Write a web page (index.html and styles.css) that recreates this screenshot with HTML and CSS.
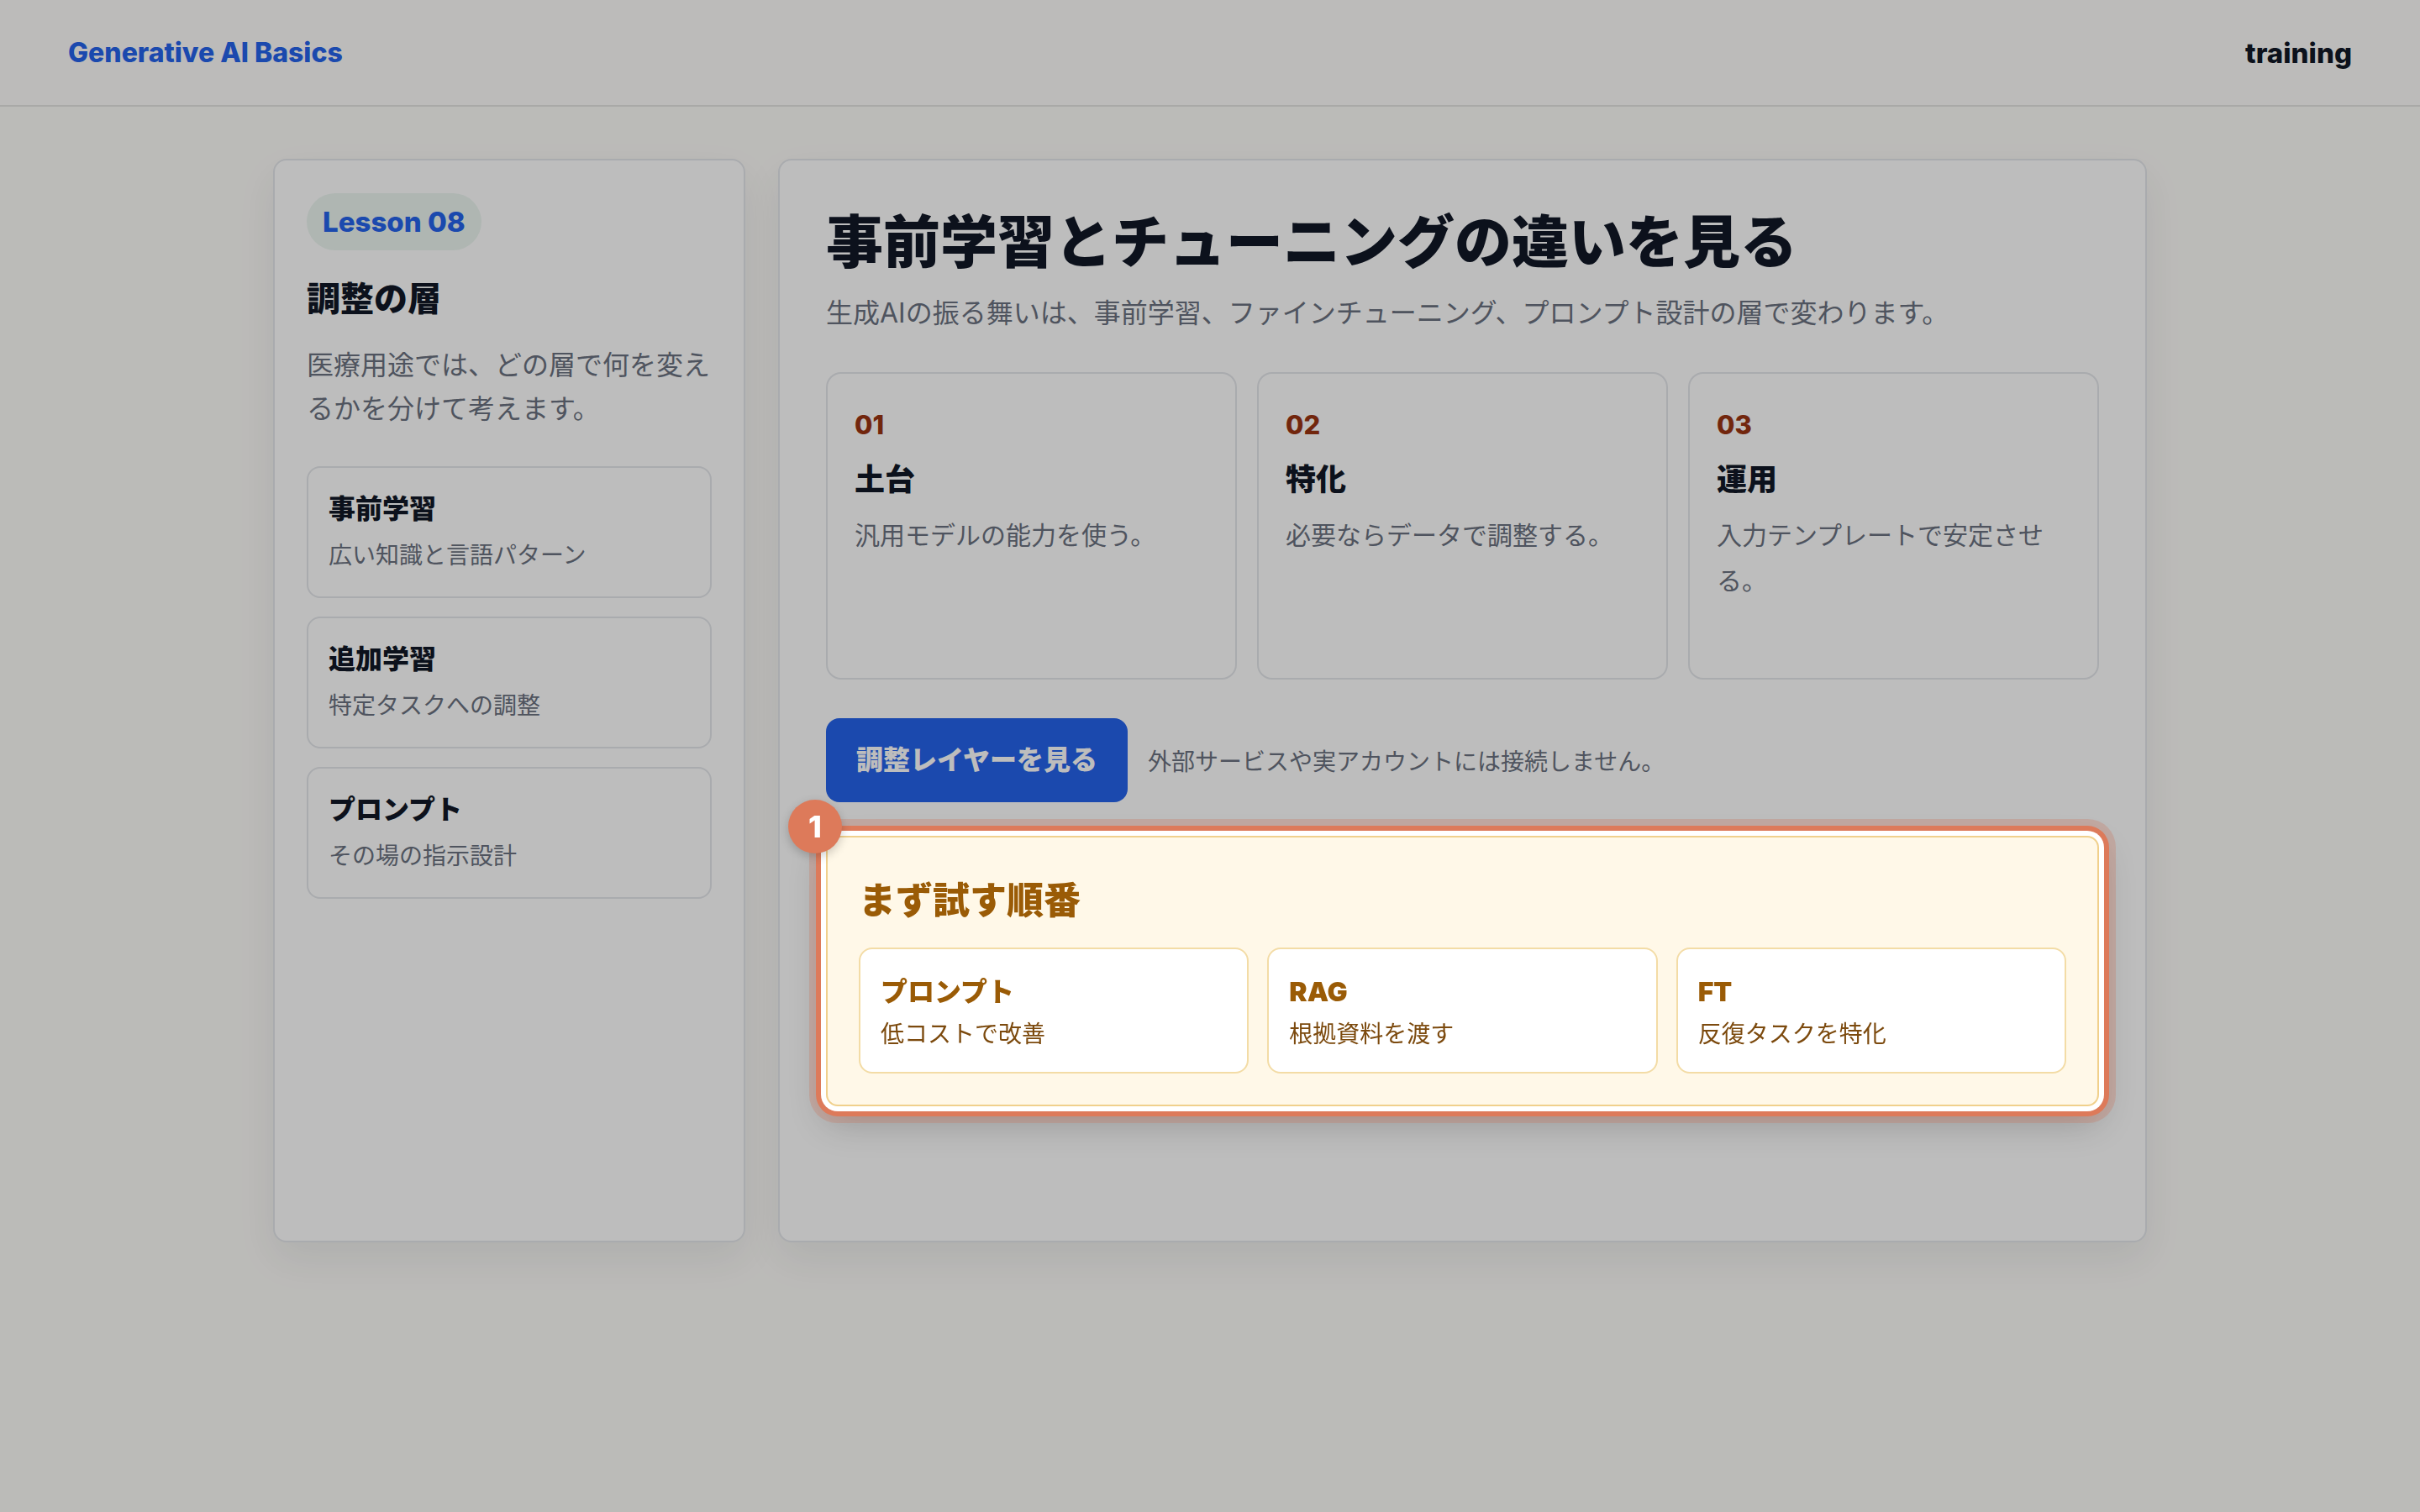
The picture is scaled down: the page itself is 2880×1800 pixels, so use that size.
FILE: index.html
```html
<!DOCTYPE html>
<html lang="ja">
<head>
  <meta charset="UTF-8">
  <title>Lesson 08 - Generative AI Basics</title>
  <link rel="stylesheet" href="styles.css">
</head>
<body>
  <header class="topbar">
    <a class="brand" href="#">Generative AI Basics</a>
    <span class="mode">training</span>
  </header>

  <main class="lesson">
    <aside class="side">
      <span class="badge">Lesson 08</span>
      <h2>調整の層</h2>
      <p class="side-lead">医療用途では、どの層で何を変えるかを分けて考えます。</p>
      <ul class="layers">
        <li class="layer"><strong>事前学習</strong><span>広い知識と言語パターン</span></li>
        <li class="layer"><strong>追加学習</strong><span>特定タスクへの調整</span></li>
        <li class="layer"><strong>プロンプト</strong><span>その場の指示設計</span></li>
      </ul>
    </aside>

    <section class="content">
      <h1>事前学習とチューニングの違いを見る</h1>
      <p class="lead">生成AIの振る舞いは、事前学習、ファインチューニング、プロンプト設計の層で変わります。</p>

      <div class="steps">
        <div class="step">
          <span class="step-no">01</span>
          <h3>土台</h3>
          <p>汎用モデルの能力を使う。</p>
        </div>
        <div class="step">
          <span class="step-no">02</span>
          <h3>特化</h3>
          <p>必要ならデータで調整する。</p>
        </div>
        <div class="step">
          <span class="step-no">03</span>
          <h3>運用</h3>
          <p>入力テンプレートで安定させる。</p>
        </div>
      </div>

      <div class="actions">
        <button class="btn" type="button">調整レイヤーを見る</button>
        <span class="note">外部サービスや実アカウントには接続しません。</span>
      </div>

      <!-- ガイドツアーで強調表示される部分 -->
      <div class="order tour-target">
        <span class="tour-step">1</span>
        <h3>まず試す順番</h3>
        <div class="order-grid">
          <div class="order-item"><strong>プロンプト</strong><span>低コストで改善</span></div>
          <div class="order-item"><strong>RAG</strong><span>根拠資料を渡す</span></div>
          <div class="order-item"><strong>FT</strong><span>反復タスクを特化</span></div>
        </div>
      </div>
    </section>
  </main>

  <div class="tour-backdrop"></div>
</body>
</html>
```

FILE: styles.css
```css
* {
  box-sizing: border-box;
}
body {
  margin: 0;
  min-height: 100vh;
  font-family: Inter, "Noto Sans CJK JP", sans-serif;
  background: #fdfcf9;
  color: #111827;
}

/* ヘッダー */
.topbar {
  display: flex;
  align-items: center;
  justify-content: space-between;
  height: 127px;
  padding: 0 81px;
  background: #fefdfb;
  border-bottom: 2px solid #e4e4e2;
}
.brand {
  color: #2563eb;
  font-size: 32px;
  font-weight: 800;
  text-decoration: none;
}
.mode {
  font-size: 33px;
  font-weight: 800;
}

/* レイアウト */
.lesson {
  display: grid;
  grid-template-columns: 562px 1fr;
  gap: 39px;
  width: 2230px;
  min-height: 1290px;
  margin: 62px auto 0;
}
.side, .content {
  background: #fff;
  border: 2px solid #e5e7eb;
  border-radius: 16px;
  box-shadow: 0 20px 48px rgba(15, 23, 42, 0.07);
}

/* サイドバー */
.side {
  display: flex;
  flex-direction: column;
  align-items: flex-start;
  padding: 39px 38px;
}
.badge {
  padding: 14px 19px;
  border-radius: 999px;
  background: #ecf6f1;
  color: #2563eb;
  font-size: 33px;
  font-weight: 800;
  line-height: 40px;
}
.side h2 {
  margin: 30px 0 0;
  font-size: 40px;
  font-weight: 900;
  line-height: 56px;
}
.side-lead {
  margin: 25px 0 0;
  font-size: 32px;
  line-height: 52px;
  color: #6b7280;
}
.layers {
  align-self: stretch;
  display: flex;
  flex-direction: column;
  gap: 22px;
  list-style: none;
  margin: 42px 0 0;
  padding: 0;
}
.layer {
  padding: 25px 24px 26px;
  border: 2px solid #e5e7eb;
  border-radius: 16px;
}
.layer strong {
  display: block;
  font-size: 32px;
  font-weight: 900;
  line-height: 48px;
}
.layer span {
  display: block;
  margin-top: 9px;
  font-size: 28px;
  line-height: 45px;
  color: #6b7280;
}

/* メイン */
.content {
  padding: 56px 55px;
}
.content h1 {
  margin: 0;
  font-size: 68px;
  font-weight: 900;
  line-height: 82px;
}
.lead {
  margin: 18px 0 0;
  font-size: 32px;
  line-height: 51px;
  color: #6b7280;
}
.steps {
  display: grid;
  grid-template-columns: repeat(3, 1fr);
  gap: 24px;
  margin-top: 45px;
}
.step {
  min-height: 366px;
  padding: 38px 32px 30px;
  border: 2px solid #e5e7eb;
  border-radius: 18px;
}
.step-no {
  display: block;
  font-size: 31px;
  line-height: 45px;
  font-weight: 800;
  color: #9a3412;
}
.step h3 {
  margin: 18px 0 0;
  font-size: 36px;
  font-weight: 900;
  line-height: 50px;
}
.step p {
  margin: 14px 0 0;
  font-size: 30px;
  line-height: 54px;
  color: #6b7280;
}
.actions {
  display: flex;
  align-items: center;
  gap: 24px;
  margin-top: 46px;
}
.btn {
  padding: 28px 36px;
  border: none;
  border-radius: 16px;
  background: #2563eb;
  color: #fff;
  font-family: inherit;
  font-size: 32px;
  font-weight: 900;
  line-height: 44px;
  cursor: pointer;
}
.note {
  font-size: 28px;
  color: #6b7280;
}

/* まず試す順番 */
.order {
  margin-top: 40px;
  padding: 40px 37px 37px;
  background: #fff8e8;
  border: 2px solid #f0d08c;
  border-radius: 14px;
}
.order h3 {
  margin: 0;
  font-size: 44px;
  font-weight: 900;
  line-height: 70px;
  color: #9a5b06;
}
.order-grid {
  display: grid;
  grid-template-columns: repeat(3, 1fr);
  gap: 22px;
  margin-top: 21px;
}
.order-item {
  padding: 28px 24px 24px;
  background: #fff;
  border: 2px solid #f3dca6;
  border-radius: 16px;
}
.order-item strong {
  display: block;
  font-size: 32px;
  font-weight: 900;
  line-height: 46px;
  color: #9a5b06;
}
.order-item span {
  display: block;
  margin-top: 6px;
  font-size: 28px;
  line-height: 42px;
  color: #7c4a0e;
}

/* ガイドツアー */
.tour-backdrop {
  position: fixed;
  inset: 0;
  z-index: 10;
  background: rgba(0, 0, 0, 0.26);
}
.tour-target {
  position: relative;
  z-index: 20;
  box-shadow:
    0 0 0 6px #fff,
    0 0 0 12px #dd7a5a,
    0 0 0 20px rgba(200, 110, 85, 0.28),
    0 18px 44px rgba(0, 0, 0, 0.22);
}
.tour-step {
  position: absolute;
  left: -47px;
  top: -45px;
  display: flex;
  align-items: center;
  justify-content: center;
  width: 64px;
  height: 64px;
  border-radius: 50%;
  background: #dd7a5a;
  color: #fff;
  font-size: 36px;
  font-weight: 800;
  box-shadow: 0 4px 12px rgba(0, 0, 0, 0.2);
}
```
